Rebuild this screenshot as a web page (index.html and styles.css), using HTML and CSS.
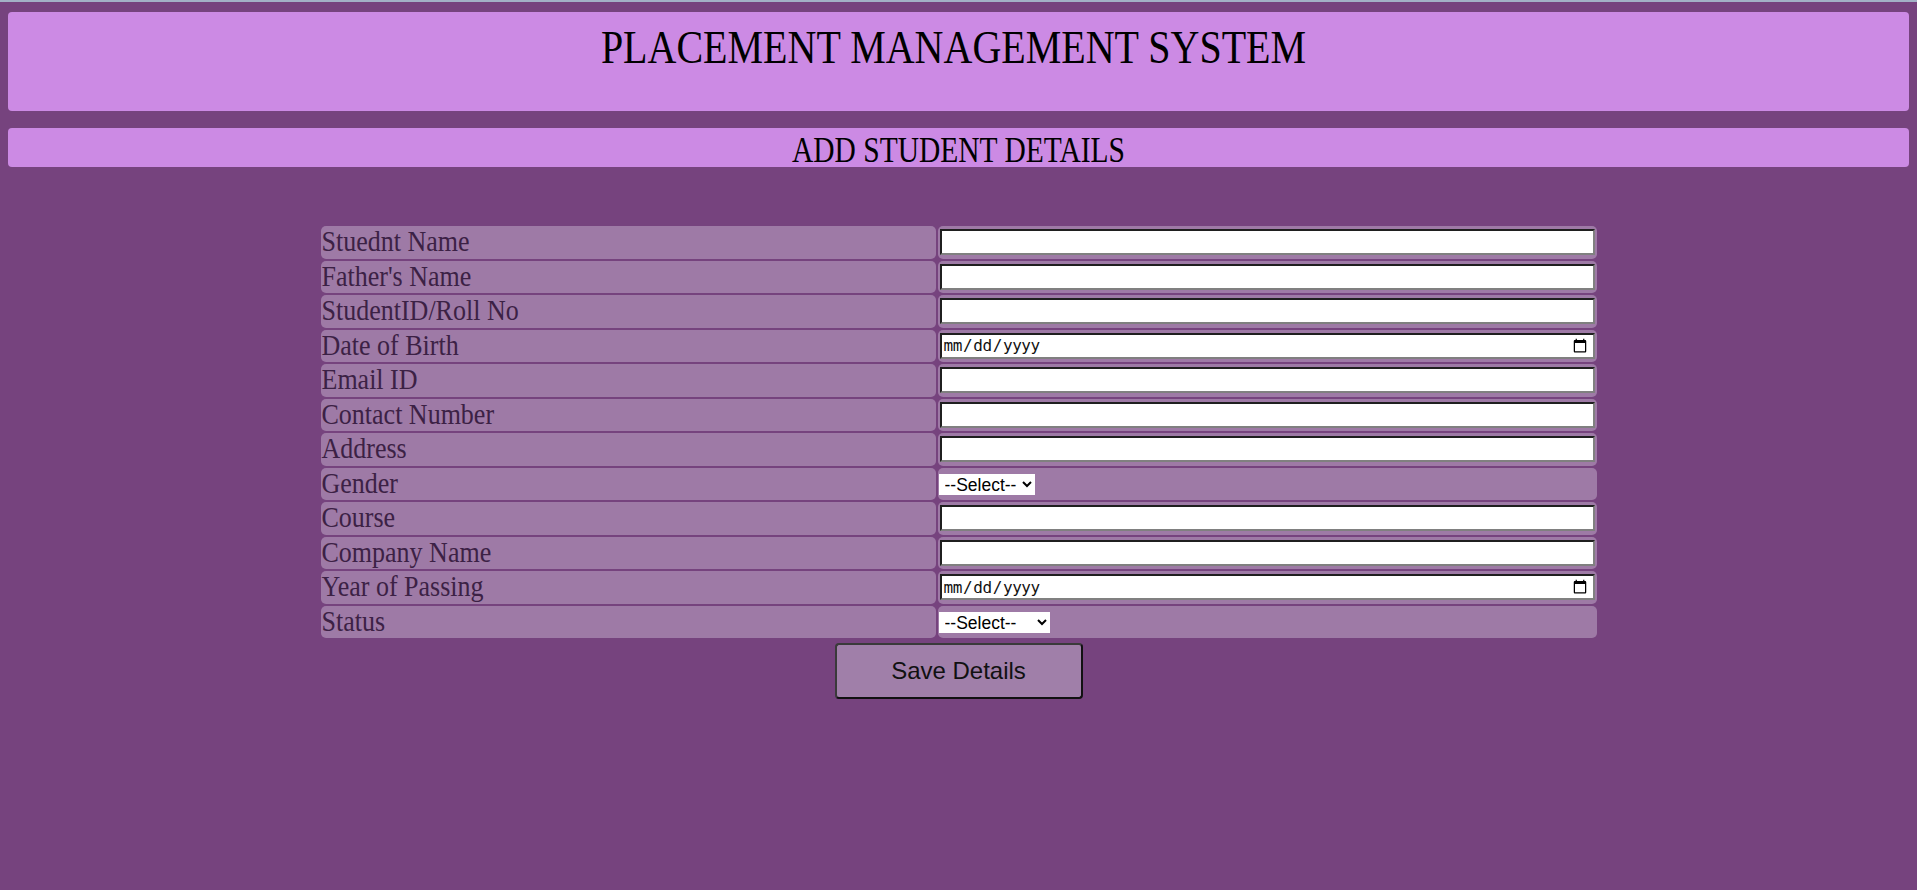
FILE: index.html
```html
<!DOCTYPE html>
<html lang="en">
<head>
<meta charset="utf-8">
<title>Placement Management System</title>
<link rel="stylesheet" href="styles.css">
</head>
<body>
<header class="banner"><span class="banner-title">PLACEMENT MANAGEMENT SYSTEM</span></header>
<div class="subbar"><span class="subbar-title">ADD STUDENT DETAILS</span></div>
<form class="student-form">
  <table class="form-table">
    <colgroup><col class="col-label"><col class="col-field"></colgroup>
    <tr><td class="label"><span>Stuednt Name</span></td><td class="field"><input class="text-in" type="text"></td></tr>
    <tr><td class="label"><span>Father's Name</span></td><td class="field"><input class="text-in" type="text"></td></tr>
    <tr><td class="label"><span>StudentID/Roll No</span></td><td class="field"><input class="text-in" type="text"></td></tr>
    <tr><td class="label"><span>Date of Birth</span></td><td class="field"><input class="text-in date-in" type="date"></td></tr>
    <tr><td class="label"><span>Email ID</span></td><td class="field"><input class="text-in" type="text"></td></tr>
    <tr><td class="label"><span>Contact Number</span></td><td class="field"><input class="text-in" type="text"></td></tr>
    <tr><td class="label"><span>Address</span></td><td class="field"><input class="text-in" type="text"></td></tr>
    <tr><td class="label"><span>Gender</span></td><td class="field"><select class="sel sel-gender"><option>--Select--</option><option>Male</option><option>Female</option></select></td></tr>
    <tr><td class="label"><span>Course</span></td><td class="field"><input class="text-in" type="text"></td></tr>
    <tr><td class="label"><span>Company Name</span></td><td class="field"><input class="text-in" type="text"></td></tr>
    <tr><td class="label"><span>Year of Passing</span></td><td class="field"><input class="text-in date-in" type="date"></td></tr>
    <tr><td class="label"><span>Status</span></td><td class="field"><select class="sel sel-status"><option>--Select--</option><option>Placed</option><option>Not Placed</option></select></td></tr>
  </table>
  <div class="actions"><button type="button" class="save-btn">Save Details</button></div>
</form>
</body>
</html>
```
FILE: styles.css
```css
html {
  border-top: 2px solid #a3b1c6;
  background: #76437e;
}
body {
  margin: 10px 8px 8px;
  background: #76437e;
  font-family: "Liberation Serif", serif;
  color: #000;
}
.banner {
  box-sizing: border-box;
  height: 99px;
  padding-top: 14px;
  padding-right: 10px;
  background: #cc8ae4;
  border-radius: 4px;
  text-align: center;
}
.banner-title {
  display: inline-block;
  font-size: 40px;
  line-height: 44px;
  transform: scaleY(1.18);
}
.subbar {
  box-sizing: border-box;
  margin-top: 17px;
  height: 39px;
  padding-top: 7px;
  background: #cc8ae4;
  border-radius: 4px;
  text-align: center;
}
.subbar-title {
  display: inline-block;
  font-size: 29.5px;
  line-height: 30px;
  transform: scaleY(1.22);
}
.student-form {
  margin-top: 57px;
}
.form-table {
  width: 1280px;
  margin: 0 auto;
  border-spacing: 2px;
  table-layout: fixed;
}
.col-label { width: 615px; }
.col-field { width: 659px; }
.form-table td {
  padding: 1px;
  background: #9e7aa6;
  border-radius: 5px;
  vertical-align: middle;
}
.form-table td.label {
  font-size: 26px;
  line-height: 30.5px;
  color: #3c2145;
}
.label span {
  display: inline-block;
  transform: scaleY(1.16);
  transform-origin: left center;
  white-space: nowrap;
}
.text-in {
  display: block;
  box-sizing: border-box;
  width: calc(100% - 2px);
  height: 26px;
  margin: 2px 1px 2px;
  padding: 1px 2px;
  border-width: 2px;
  border-style: solid;
  border-color: #1f1f1f #808080 #808080 #1f1f1f;
  background: #fff;
  font: 14px "Liberation Sans", sans-serif;
}
.date-in {
  font: 16px "DejaVu Sans Mono", monospace;
  letter-spacing: -0.4px;
  color: #111;
  padding: 0 3px 0 1px;
}
.sel {
  box-sizing: border-box;
  height: 21px;
  margin-top: 2px;
  border: none;
  border-radius: 0;
  background: #fff;
  font: 17.5px "Liberation Sans", sans-serif;
  color: #000;
  vertical-align: middle;
  padding: 0 0 0 2px;
}
.sel-gender { width: 96px; }
.sel-status { width: 111px; }
.actions {
  margin-top: 3px;
  text-align: center;
}
.save-btn {
  width: 248px;
  height: 56px;
  background: #a07fa9;
  border: 2px solid;
  border-color: #3a3a3a #111 #111 #3a3a3a;
  border-radius: 4px;
  font: 24px "Liberation Sans", sans-serif;
  color: #111;
}
```
